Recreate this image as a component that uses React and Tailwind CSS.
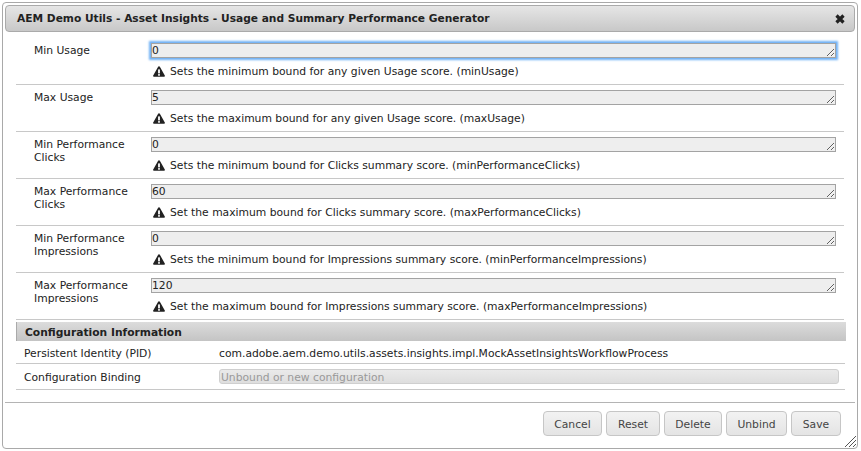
import React from 'react';

const fields = [
    { label: "Min Usage", value: "0", hint: "Sets the minimum bound for any given Usage score. (minUsage)", focus: true },
    { label: "Max Usage", value: "5", hint: "Sets the maximum bound for any given Usage score. (maxUsage)" },
    { label: "Min Performance Clicks", value: "0", hint: "Sets the minimum bound for Clicks summary score. (minPerformanceClicks)" },
    { label: "Max Performance Clicks", value: "60", hint: "Set the maximum bound for Clicks summary score. (maxPerformanceClicks)" },
    { label: "Min Performance Impressions", value: "0", hint: "Sets the minimum bound for Impressions summary score. (minPerformanceImpressions)" },
    { label: "Max Performance Impressions", value: "120", hint: "Set the maximum bound for Impressions summary score. (maxPerformanceImpressions)" },
];

const buttons = [
    { label: "Cancel", width: "w-[59px]" },
    { label: "Reset", width: "w-[54px]" },
    { label: "Delete", width: "w-[58px]" },
    { label: "Unbind", width: "w-[61px]" },
    { label: "Save", width: "w-[50px]" },
];

const AlertIcon = () => (
    <svg width="12" height="11" viewBox="0 0 12 11" className="shrink-0">
        <path d="M6 0.2 C6.5 0.2 6.8 0.5 7 0.9 L11.8 9.4 C12.2 10.1 11.8 10.8 11 10.8 L1 10.8 C0.2 10.8 -0.2 10.1 0.2 9.4 L5 0.9 C5.2 0.5 5.5 0.2 6 0.2 Z" fill="#222" />
        <rect x="5.1" y="3.4" width="1.8" height="4" fill="#fff" />
        <rect x="5.1" y="8.1" width="1.8" height="1.6" fill="#fff" />
    </svg>
);

const CloseIcon = () => (
    <svg width="10" height="10" viewBox="0 0 10 10">
        <path d="M1.5 1.5 L8.5 8.5 M8.5 1.5 L1.5 8.5" stroke="#222" strokeWidth="3.2" />
    </svg>
);

const Field = ({ field }) => (
    <div className="flex h-[47px] border-b border-[#c8c8c8] pt-[5px]">
        <div className="w-[135px] shrink-0 pt-px pl-[18px] pr-2 leading-[13px] text-[#222]">{field.label}</div>
        <div className="w-[685px]">
            <textarea
                defaultValue={field.value}
                rows={1}
                spellCheck={false}
                className={`block h-[15px] w-full overflow-hidden whitespace-pre bg-[#eeeeee] px-0 text-[10.75px] leading-[13px] text-[#222] outline-none border border-[#a3a3a3] ${field.focus ? "shadow-[0_0_2px_2px_#6fb0f5]" : ""}`}
            />
            <div className="mt-[6px] flex items-center gap-[5px] pl-[2px] leading-[13px] text-[#222]">
                <AlertIcon />
                <span className="pt-px">{field.hint}</span>
            </div>
        </div>
    </div>
);

const App = () => {
    return (
        <div className="h-[451px] w-[861px] overflow-hidden bg-white pt-[2px] pl-[2px] text-[10.75px] font-['DejaVu_Sans','Verdana',sans-serif]">
            {/* DIALOG */}
            <div className="relative h-[447px] w-[856px] rounded-[4px] border border-[#a9a9a9] bg-white p-[2px]">
                {/* TITLE BAR */}
                <div className="flex h-[27px] items-center justify-between rounded-[4px] border border-[#aaaaaa] bg-gradient-to-b from-[#e6e6e6] to-[#c8c8c8] pl-[11px] pr-[9px]">
                    <span className="text-[10.65px] font-bold text-[#222]">AEM Demo Utils - Asset Insights - Usage and Summary Performance Generator</span>
                    <CloseIcon />
                </div>

                {/* FIELDS */}
                <div className="mx-[11px] mt-[6px] w-[828px]">
                    {fields.map((field) => <Field key={field.label} field={field} />)}
                </div>

                {/* CONFIGURATION INFORMATION */}
                <div className="mx-[11px] mt-[2px] w-[830px]">
                    <div className="flex h-[19px] items-center border-l border-[#aaaaaa] bg-gradient-to-b from-[#dcdcdc] to-[#c4c4c4] pt-[3px] pl-2 text-[10.7px] font-bold text-[#222]">Configuration Information</div>
                    <div className="flex h-[23px] w-[829px] items-center border-b border-[#c8c8c8] pt-[4px] pl-2 text-[#222]">
                        <span className="w-[195px]">Persistent Identity (PID)</span>
                        <span>com.adobe.aem.demo.utils.assets.insights.impl.MockAssetInsightsWorkflowProcess</span>
                    </div>
                    <div className="flex h-[26px] w-[829px] items-center border-b border-[#c8c8c8] pl-2 text-[#222]">
                        <span className="w-[195px] pt-[3px]">Configuration Binding</span>
                        <div className="h-[15px] w-[620px] rounded-[3px] border border-[#cfcfcf] bg-gradient-to-b from-[#eaeaea] to-[#dedede] pl-px leading-[15px] text-[#999999]">Unbound or new configuration</div>
                    </div>
                </div>

                {/* BUTTONS */}
                <div className="mt-[12px] flex h-[47px] justify-end gap-[4px] border-t border-[#b4b4b4] pt-[8px] pr-[14px]">
                    {buttons.map((b) => (
                        <button key={b.label} className={`h-[25px] ${b.width} rounded-[4px] border border-[#c6c6c6] bg-gradient-to-b from-[#f2f2f2] to-[#e4e4e4] pt-[4px] text-[10.75px] text-[#444444]`}>
                            {b.label}
                        </button>
                    ))}
                </div>

                {/* RESIZE GRIP */}
                <svg width="12" height="12" viewBox="0 0 12 12" className="absolute bottom-[1px] right-[1px]">
                    <path d="M1 12 L12 1 M5 12 L12 5 M9 12 L12 9" stroke="#555" strokeWidth="1" />
                </svg>
            </div>

            {/* PAGE BEHIND THE DIALOG, ONLY THE TOP OF A LINE SHOWS */}
            <div className="pl-[46px] leading-[13px] text-[#444444]">Asset Daily Evaluation Service for Asset metadata</div>
        </div>
    );
};

export default App;
